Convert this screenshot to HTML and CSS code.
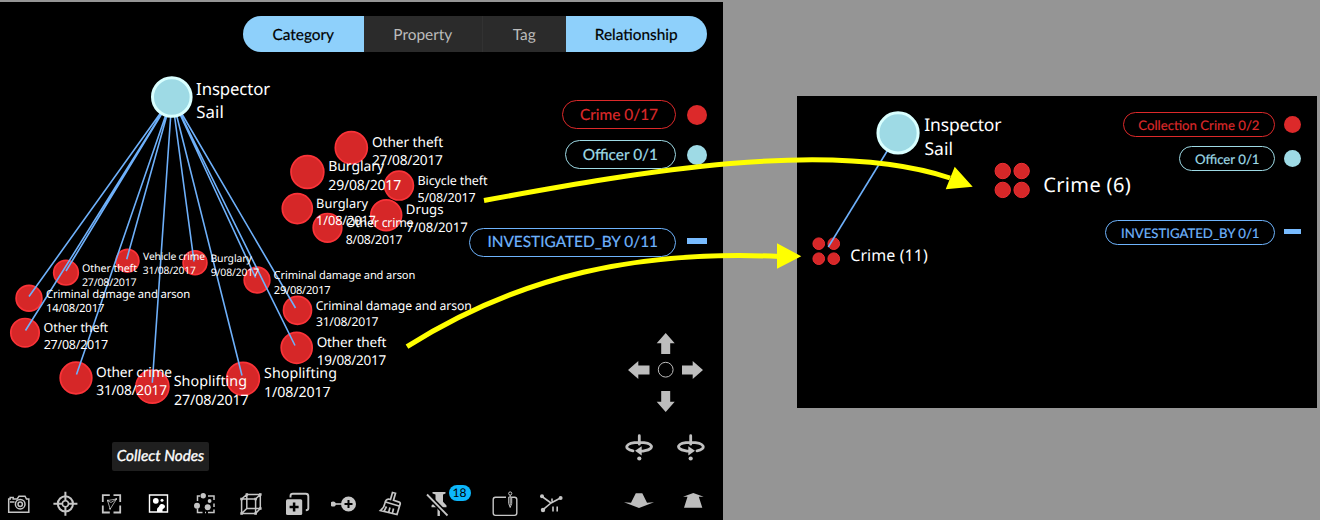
FILE: index.html
```html
<!DOCTYPE html>
<html lang="en">
<head>
<meta charset="utf-8">
<title>Collect Nodes</title>
<link rel="stylesheet" href="styles.css">
</head>
<body>
<main class="page">
  <section class="panel before">
    <svg class="graph" viewBox="0 2 723 518">
      <g class="crime">
        <circle cx="127.5" cy="260.7" r="11.4"/><circle cx="195" cy="262.8" r="11.9"/>
        <circle cx="66" cy="272.7" r="12.3"/><circle cx="257" cy="280" r="12.8"/>
        <circle cx="29" cy="298.3" r="12.9"/><circle cx="297.5" cy="310.3" r="14"/>
        <circle cx="25" cy="332.7" r="14.2"/><circle cx="296.7" cy="347.8" r="15.5"/>
        <circle cx="76" cy="378" r="15.8"/><circle cx="243" cy="378.7" r="16.4"/>
        <circle cx="152.4" cy="386.7" r="16.5"/>
        <circle cx="351.3" cy="147.7" r="16"/><circle cx="307.4" cy="172" r="16.4"/>
        <circle cx="399" cy="185.6" r="14.4"/><circle cx="297.3" cy="208.6" r="15"/>
        <circle cx="386.2" cy="215.2" r="15.4"/><circle cx="327.5" cy="227.8" r="14.3"/>
      </g>
      <path class="edges" d="M172 97L126.7 259.3M172 97L194 261.5M172 97L66 271M172 97L255.5 277.5M172 97L29 296.5M172 97L295.5 308M172 97L25.5 330.5M172 97L295 345.5M172 97L76.5 374.5M172 97L242 375.5M172 97L152.3 382.8"/>
      <circle class="officer" cx="171.8" cy="97" r="19.3"/>
      <g class="label">
        <g font-size="16.8"><text x="196.1" y="95" textLength="74">Inspector</text><text x="196.3" y="118" textLength="27.5">Sail</text></g>
        <g font-size="10.3"><text x="143.1" y="260" textLength="62">Vehicle crime</text><text x="142.8" y="274" textLength="53">31/08/2017</text></g>
        <g font-size="10.4"><text x="210.4" y="262" textLength="41.5">Burglary</text><text x="210.8" y="276" textLength="48.3">9/08/2017</text></g>
        <g font-size="10.7"><text x="82" y="272" textLength="55">Other theft</text><text x="82" y="286" textLength="54.7">27/08/2017</text></g>
        <g font-size="11.1"><text x="273.6" y="279.2" textLength="141.7">Criminal damage and arson</text><text x="273.8" y="294" textLength="56.9">29/08/2017</text></g>
        <g font-size="11.3"><text x="45.9" y="297.6" textLength="144.4">Criminal damage and arson</text><text x="45.9" y="312.3" textLength="58.5">14/08/2017</text></g>
        <g font-size="12.2"><text x="315.7" y="309.5" textLength="156">Criminal damage and arson</text><text x="315.9" y="326.3" textLength="62.7">31/08/2017</text></g>
        <g font-size="12.5"><text x="43.6" y="332" textLength="64.5">Other theft</text><text x="43.7" y="348.6" textLength="64.4">27/08/2017</text></g>
        <g font-size="13.5"><text x="316.7" y="347" textLength="69.6">Other theft</text><text x="316.7" y="365.2" textLength="69.5">19/08/2017</text></g>
        <g font-size="13.7"><text x="96.1" y="377.2" textLength="76">Other crime</text><text x="96.3" y="395.3" textLength="70.7">31/08/2017</text></g>
        <g font-size="14.2"><text x="264.1" y="378" textLength="72.8">Shoplifting</text><text x="264" y="397" textLength="66.6">1/08/2017</text></g>
        <g font-size="14.3"><text x="173.7" y="385.6" textLength="73.3">Shoplifting</text><text x="173.9" y="404.6" textLength="74.9">27/08/2017</text></g>
        <g font-size="13.7"><text x="371.9" y="146.7" textLength="71.3">Other theft</text><text x="372" y="165.3" textLength="70.9">27/08/2017</text></g>
        <g font-size="14"><text x="328.2" y="170.7" textLength="56">Burglary</text><text x="328.3" y="189.5" textLength="72.9">29/08/2017</text></g>
        <g font-size="12.5"><text x="417.5" y="184.8" textLength="70">Bicycle theft</text><text x="417.6" y="201.5" textLength="58">5/08/2017</text></g>
        <g font-size="12.8"><text x="316.1" y="207.6" textLength="51.9">Burglary</text><text x="316.1" y="224.8" textLength="59.8">1/08/2017</text></g>
        <g font-size="13.2"><text x="405.8" y="214.4" textLength="37.8">Drugs</text><text x="406.1" y="232.3" textLength="61.6">7/08/2017</text></g>
        <g font-size="12.4"><text x="345.8" y="226.5" textLength="67.8">Other crime</text><text x="345.7" y="243.5" textLength="57">8/08/2017</text></g>
      </g>
    </svg>

    <nav class="tabs">
      <a class="tab tab-category on">Category</a><a class="tab tab-property">Property</a><a class="tab tab-tag">Tag</a><a class="tab tab-relationship on">Relationship</a>
    </nav>

    <ul class="legend">
      <li class="red"><span class="pill">Crime 0/17</span><i class="dot"></i></li>
      <li class="aqua"><span class="pill">Officer 0/1</span><i class="dot"></i></li>
      <li class="blue relation"><span class="pill">INVESTIGATED_BY 0/11</span><i class="dash"></i></li>
    </ul>

    <svg class="pad" viewBox="0 0 76 80">
      <path d="M37.7 0l9 10.3h-4.5V21h-9V10.3h-4.5zM37.7 79l9-10.3h-4.5V58h-9v10.7h-4.5zM0 37l10.3-9v4.5H21.5v9H10.3V46zM75 37l-10.3-9v4.5H54v9h10.7V46z"/>
      <circle cx="37.7" cy="36.7" r="7.4"/>
    </svg>

    <div class="middle">
      <span class="tip">Collect Nodes</span>
      <div class="spins">
        <svg class="spin" viewBox="0 0 28 30">
          <path class="ring" d="M8 17.8C-2 16 0 9.3 14.3 9.3S30 15.800 20 17.6q-2 .5-4 .6M14.300 2.700v8.500"/><path class="fill" d="M10 17.800l6.700-4.600v9.200z"/><circle class="fill" cx="14.300" cy="25.500" r="2.100"/>
        </svg>
        <svg class="spin" viewBox="0 0 28 30">
          <path class="ring" d="M20 17.8C30 16 28 9.3 13.700 9.3S-2 15.800 8 17.600q2 .5 4 .6M13.700 2.700v8.500"/><path class="fill" d="M18 17.800l-6.700-4.600v9.200z"/><circle class="fill" cx="13.700" cy="25.500" r="2.100"/>
        </svg>
      </div>
    </div>

    <div class="toolbar">
      <svg class="icon" viewBox="0 0 28 28"><path d="M3.700 9h1.500V7.500h3V9h4l1.800-2.800h6L21.500 9h2.300v13.200H3.700zM5 12h4.500"/><circle cx="15.200" cy="14.200" r="4.800"/><circle cx="15.200" cy="14.200" r="2.200"/></svg>
      <svg class="icon" viewBox="0 0 28 28"><g transform="translate(-.6 -.2)"><circle cx="14" cy="14" r="7.600" stroke-width="2"/><circle cx="14" cy="14" r="3"/><path stroke-width="2" d="M14 2v9M14 17v9M2 14h9M17 14h9"/></g></svg>
      <svg class="icon" viewBox="0 0 28 28"><path stroke-width="1.800" d="M4.800 12V5.200h7M15.500 5.200h6.700V12M22.200 15.500v7h-6.700M11.800 22.500h-7v-7"/><path stroke-width=".8" d="M9.500 10.500l9-1.500-6.300 10zM9.500 10.500l3.500 2 5.500-3.500"/><path class="fill" d="M9 9.800h1.500v1.500H9zM17.500 8.200H19v1.500h-1.500zM11.300 18h1.600v1.600h-1.600z"/></svg>
      <svg class="icon bright" viewBox="0 0 28 28"><path stroke-width="1.400" d="M4.500 5h18v17h-18z"/><path class="fill" d="M12 22v-2.500c0-2 2-2 2.500-4 .5-2.500 5.500-2 5.500 1 0 2-2.500 2-2.500 3.500v2z"/><circle class="fill" cx="10.800" cy="10.800" r="2.900"/><circle class="fill" cx="17" cy="10.300" r="1.500"/></svg>
      <svg class="icon" viewBox="0 0 28 28"><path stroke-width="1.500" d="M9 6H6.500v5M17 6h6v4M6.500 18.500v4h5M23 13.500V17M23 19.500v3h-6M14 22.500h1"/><circle class="fill" cx="12.200" cy="5.800" r="2.700"/><circle class="fill" cx="6" cy="15.700" r="3"/><circle class="fill" cx="16.700" cy="17.200" r="3"/><circle class="fill" cx="18.600" cy="11" r="1.900"/></svg>
      <svg class="icon" viewBox="0 0 28 28"><g transform="translate(-.7 0)"><path d="M4.300 9h14v14.500h-14zM9.500 4.500h13.500v14H9.500zM4.300 9l5.200-4.500M18.300 9L23 4.500M4.300 23.500l5.200-5M18.300 23.500l4.700-5"/><path class="fill" d="M3 7.700h2.600v2.600H3zM17 7.700h2.600v2.600H17zM3 22.200h2.600v2.600H3zM17 22.200h2.600v2.600H17zM8.300 3.200h2.500v2.500H8.300zM21.700 3.200h2.600v2.500h-2.600zM21.700 17.200h2.600v2.600h-2.600z"/></g></svg>
      <svg class="icon" viewBox="0 0 28 28"><path stroke-width="1.900" d="M6.500 7.500V6q0-2.300 2.300-2.300h13q2.500 0 2.500 2.500v12q0 2-2.500 2"/><rect class="fill" x="2" y="9.200" width="16.200" height="15.800" rx="1.500"/><path class="cut" d="M10.100 12.500v9M5.600 17h9"/></svg>
      <svg class="icon" viewBox="0 0 28 28"><g transform="translate(-.8 0)"><path stroke-width="1.600" d="M2 14h10"/><circle class="fill" cx="3" cy="14" r="2.600"/><circle class="fill" cx="18.300" cy="14" r="7.500"/><path class="cut thin" d="M18.300 10v8M14.300 14h8"/></g></svg>
      <svg class="icon" viewBox="0 0 28 28"><path stroke-width="1.700" d="M15.500 2.500l3 .8-2 7 5.700 1.800q1.500.6.800 2.500L20 24.500 3.500 20.500Q7.500 17 8 13q.4-3.500 3.500-4l2 .5zM8.500 12l13.500 4M9.500 16.500l-2.500 5M13 17.500l-1.500 5.300M16.500 18.500l-1.200 5.300"/></svg>
      <div class="pin">
        <svg class="icon" viewBox="0 0 28 28"><path class="fill" d="M8.500 2h13v1.600l-2.500.8v7.400l3.500 3.800v1.700H7.500v-1.700l4-3.800V4.400L8.500 3.600zM13.500 17h2.400v9h-2.400z"/><path stroke="#000" stroke-width="5" d="M3 4.500l20.500 21"/><path stroke-width="1.800" d="M3 4.500L23.500 25.500"/></svg>
        <b class="badge">18</b>
      </div>
      <svg class="icon note" viewBox="0 0 28 28"><path stroke-width="1.400" d="M15 7.300H4.500Q2.200 7.300 2.200 9.600v13.500q0 2.300 2.300 2.300h19q2.300 0 2.300-2.300V9.600q0-2.300-2.300-2.300h-3"/><circle stroke-width="1" cx="19.200" cy="3.500" r="1.600"/><path stroke-width="1" d="M17.700 7h3v6.500l-1.500 4-1.500-4zM19.200 5v10"/></svg>
      <svg class="icon" viewBox="0 0 28 28"><path stroke-width="1.600" d="M5 6.500l9 6.500 9.500-5M14 13l-8 6.700M15 8.500v3M16 16.500v5M20.200 16.500v5"/><circle class="fill" cx="5" cy="6.300" r="2"/><circle class="fill" cx="23.600" cy="7.900" r="2"/><circle class="fill" cx="6" cy="20" r="2.200"/></svg>
      <svg class="tilt first" viewBox="0 0 32 28"><path d="M12.800 3.300h6.500l4.700 9.500 7-.6L16 18 1 12.200l7 .6z"/></svg>
      <svg class="tilt" viewBox="0 0 32 28"><path d="M16.300 3l10.400 3.700h-4.900l3.500 11H7l3.500-11H6z"/></svg>
    </div>
  </section>

  <section class="panel after">
    <svg class="graph" viewBox="797 96 520 312">
      <g class="crime small">
        <circle cx="818.5" cy="243.7" r="5.8"/><circle cx="833.5" cy="243.7" r="5.8"/><circle cx="818.5" cy="258.7" r="5.8"/><circle cx="833.5" cy="258.7" r="5.8"/>
        <circle cx="1002.5" cy="171" r="7.7"/><circle cx="1021.4" cy="171" r="7.7"/><circle cx="1002.5" cy="189.9" r="7.7"/><circle cx="1021.4" cy="189.9" r="7.7"/>
      </g>
      <path class="edges" d="M898 133L828 247"/>
      <circle class="officer" cx="897.8" cy="132.9" r="20.1"/>
      <g class="label">
        <g font-size="17.5"><text x="923.9" y="131.3" textLength="77.4">Inspector</text><text x="924.2" y="155" textLength="28.5">Sail</text></g>
        <text font-size="16" x="850" y="260.7" textLength="77.500">Crime (11)</text>
        <text font-size="20" x="1043" y="192.3" textLength="87.500">Crime (6)</text>
      </g>
    </svg>
    <ul class="legend">
      <li class="red"><span class="pill">Collection Crime 0/2</span><i class="dot"></i></li>
      <li class="aqua"><span class="pill">Officer 0/1</span><i class="dot"></i></li>
      <li class="blue relation"><span class="pill">INVESTIGATED_BY 0/1</span><i class="dash"></i></li>
    </ul>
  </section>

  <svg class="arrows" viewBox="0 0 1320 520">
    <path class="line" d="M484 200.5C640 172 830 138 950 178M407 346.7C520 275 640 250 780 256.5"/>
    <path class="head" d="M954.7 166.7l18 20-27 2.6zM777 243.3l24.3 13-24.3 12.4z"/>
  </svg>
</main>
</body>
</html>
```
FILE: styles.css
```css
* { box-sizing: border-box; }
body { margin: 0; background: #959595; font-family: Lato, sans-serif; text-rendering: geometricPrecision; }
.page { position: relative; display: flex; gap: 73.5px; width: 1320px; height: 520px; overflow: hidden; align-items: flex-start; }
.panel { position: relative; background: #000; display: flex; flex-direction: column; flex: none; }
.before { width: 723px; height: 518px; margin-top: 2px; padding-top: 14px; }
.after { width: 520.5px; height: 312px; margin-top: 96px; padding-top: 16px; }

/* node canvas */
.graph { position: absolute; inset: 0; width: 100%; height: 100%; }
.crime circle { fill: #d62728; stroke: #fa3338; stroke-width: 1.7; }
.crime.small circle { stroke-width: 1; stroke: #ee3034; }
.officer { fill: #9edae5; stroke: #d9ffff; stroke-width: 3; }
.edges { fill: none; stroke: #6eb0fa; stroke-width: 1.6; }
.label { fill: #fff; font-family: "Noto Sans", sans-serif; }
.arrows { position: absolute; inset: 0; width: 1320px; height: 520px; pointer-events: none; }
.line { fill: none; stroke: #ff0; stroke-width: 5; }
.head { fill: #ff0; }

.tabs { position: relative; display: flex; align-self: flex-end; margin-right: 16px; height: 36px; border-radius: 18px; overflow: hidden; }
.tab { display: flex; align-items: center; justify-content: center; font-size: 15.4px; background: #2b2b2b; color: #bcbcbc; padding-top: 1px; }
.tab.on { background: #8ed0fb; color: #000; -webkit-text-stroke: .2px #000; }
.tab-category { width: 120.5px; }
.tab-property { width: 118.5px; }
.tab-tag { width: 83.5px; border-left: 1px solid #323232; }
.tab-relationship { width: 141.5px; }

.legend { position: relative; list-style: none; margin: 48px 16px 0 0; padding: 0; display: flex; flex-direction: column; gap: 11px; }
.legend li { display: flex; justify-content: flex-end; align-items: center; gap: 11px; height: 29px; }
.pill { height: 29px; padding: 0 17px; border: 1px solid; border-radius: 15px; font-size: 15.4px; line-height: 28px; -webkit-text-stroke: .2px; }
.dot { width: 20px; height: 20px; border-radius: 50%; background: currentColor; }
.dash { width: 20px; height: 6px; margin-bottom: 3px; background: #78bbff; }
.red { color: #dc292a; }
.aqua { color: #9edae5; }
.blue { color: #6eb3fc; }
.legend .relation { margin-top: 48px; }
.relation .pill { line-height: 27px; }
.after .legend { margin: 0 16px 0 0; gap: 9px; }
.after .legend li { height: 25px; gap: 9px; }
.after .pill { height: 25px; padding: 0 14.5px; font-size: 13.2px; line-height: 24px; }
.after .dot { width: 17px; height: 17px; }
.after .dash { width: 17px; height: 5px; }
.after .legend .relation { margin-top: 40px; }

.pad { width: 76px; height: 80px; align-self: flex-end; margin: 76px 19px 0 0; position: relative; }
.pad path { fill: #bdbdbd; }
.pad circle { fill: none; stroke: #bdbdbd; stroke-width: 1; }
.middle { position: relative; display: flex; justify-content: space-between; align-items: flex-end; margin: 20px 18px 0 112px; height: 38px; }
.tip { background: #1f1f1f; color: #fff; font-size: 15.3px; font-style: italic; width: 97px; height: 29px; line-height: 29px; text-align: center; border-radius: 2px; white-space: nowrap; -webkit-text-stroke: .35px #fff; }
.spins { display: flex; gap: 24px; align-self: flex-start; }
.spin { width: 28px; height: 30px; }
.ring { fill: none; stroke: #c0c0c0; stroke-width: 2.8; stroke-linecap: round; }
.fill { fill: #c4c4c4; stroke: none; }

.toolbar { position: relative; display: flex; gap: 18.5px; margin: 19px 0 0 5px; height: 28px; }
.icon { width: 28px; height: 28px; flex: none; display: block; fill: none; stroke: #c6c6c6; stroke-width: 1.5; }
.icon .fill { fill: #c6c6c6; stroke: none; }
.icon.bright { stroke: #fff; }
.icon.bright .fill { fill: #fff; }
.icon .cut { stroke: #000; stroke-width: 2.5; }
.icon .cut.thin { stroke-width: 2; }
.pin { position: relative; }
.badge { position: absolute; left: 25px; top: -5px; width: 22px; height: 16px; border-radius: 8px; background: #0db7fb; color: #000; font-size: 12px; line-height: 16px; text-align: center; font-weight: 400; }
.note { margin-left: 20.5px; }
.tilt { width: 32px; height: 28px; flex: none; fill: #bdbdbd; }
.tilt.first { margin-left: 39.5px; }
.tilt:last-child { margin-left: 3.5px; }
```
